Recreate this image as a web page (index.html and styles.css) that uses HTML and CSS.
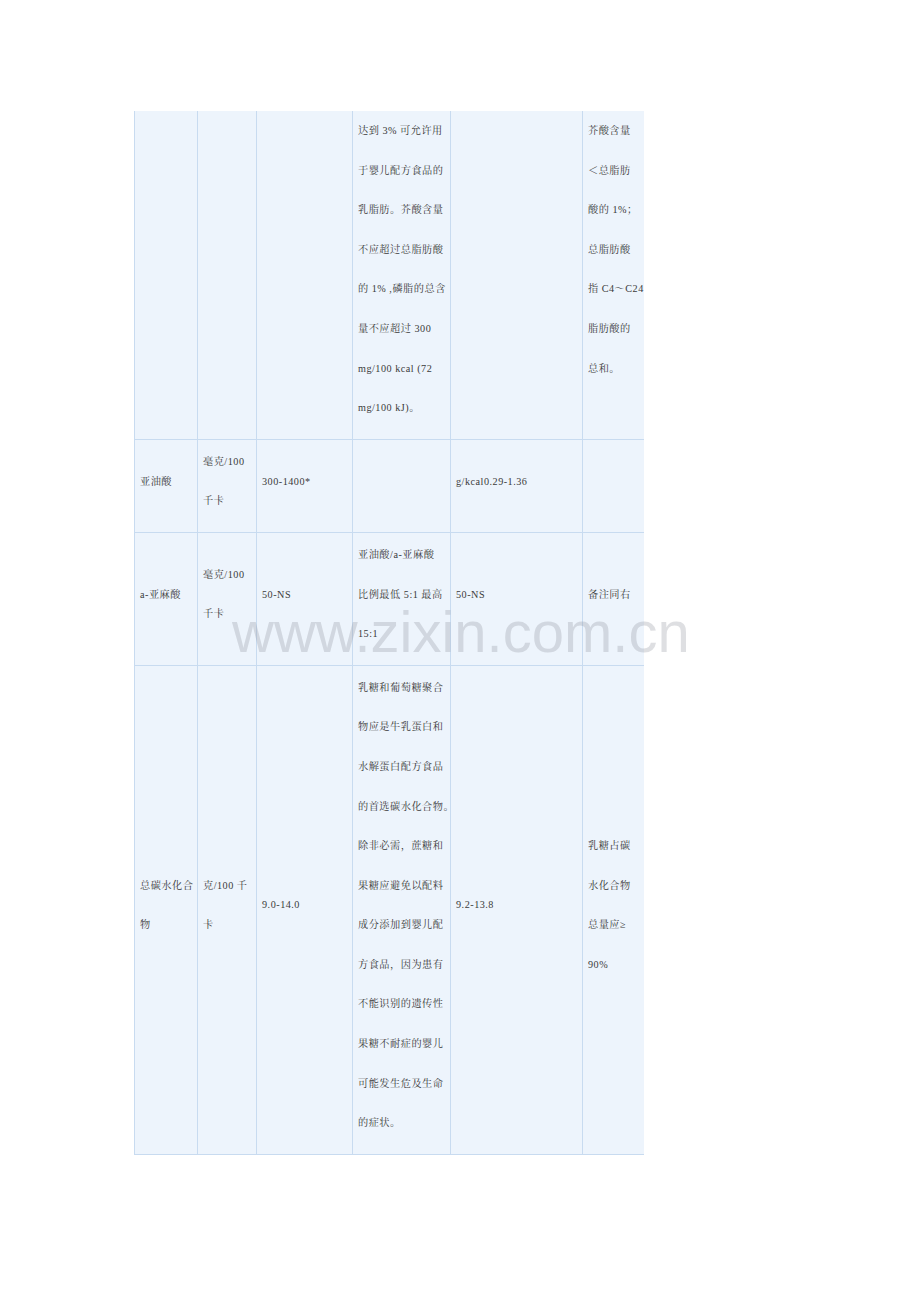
FILE: index.html
```html
<!DOCTYPE html>
<html lang="zh">
<head>
<meta charset="utf-8">
<title>营养成分表</title>
<link rel="stylesheet" href="styles.css">
</head>
<body>
<div class="page">
  <div class="clip">
    <table class="grid">
      <colgroup>
        <col class="c1"><col class="c2"><col class="c3"><col class="c4"><col class="c5"><col class="c6">
      </colgroup>
      <tr class="cont">
        <td></td>
        <td></td>
        <td></td>
        <td>达到 3% 可允许用<br>于婴儿配方食品的<br>乳脂肪。芥酸含量<br>不应超过总脂肪酸<br>的 1% ,磷脂的总含<br>量不应超过 300<br>mg/100 kcal (72<br>mg/100 kJ)。</td>
        <td></td>
        <td>芥酸含量<br>＜总脂肪<br>酸的 1%；<br>总脂肪酸<br>指 C4～C24<br>脂肪酸的<br>总和。</td>
      </tr>
      <tr>
        <td>亚油酸</td>
        <td>毫克/100<br>千卡</td>
        <td>300-1400*</td>
        <td></td>
        <td>g/kcal0.29-1.36</td>
        <td></td>
      </tr>
      <tr>
        <td>a-亚麻酸</td>
        <td>毫克/100<br>千卡</td>
        <td>50-NS</td>
        <td>亚油酸/a-亚麻酸<br>比例最低 5:1 最高<br>15:1</td>
        <td>50-NS</td>
        <td>备注同右</td>
      </tr>
      <tr>
        <td>总碳水化合<br>物</td>
        <td>克/100 千<br>卡</td>
        <td>9.0-14.0</td>
        <td>乳糖和葡萄糖聚合<br>物应是牛乳蛋白和<br>水解蛋白配方食品<br>的首选碳水化合物。<br>除非必需，蔗糖和<br>果糖应避免以配料<br>成分添加到婴儿配<br>方食品，因为患有<br>不能识别的遗传性<br>果糖不耐症的婴儿<br>可能发生危及生命<br>的症状。</td>
        <td>9.2-13.8</td>
        <td>乳糖占碳<br>水化合物<br>总量应≥<br>90%</td>
      </tr>
    </table>
  </div>
</div>
<div class="wm">www.zixin.com.cn</div>
</body>
</html>
```

FILE: styles.css
```css
html, body {
  margin: 0;
  padding: 0;
  background: #ffffff;
}

body {
  font-family: "Liberation Serif", "Noto Serif CJK SC", "Noto Sans CJK SC", serif;
  color: #3a3a3a;
  min-height: 1302px;
  position: relative;
}

.page {
  padding: 111px 0 0 134px;
}

.clip {
  width: 510px;
  overflow: hidden;
}

.grid {
  border-collapse: collapse;
  table-layout: fixed;
  width: 548px;
  background: #edf4fc;
}

.c1 { width: 63px; }
.c2 { width: 59px; }
.c3 { width: 96px; }
.c4 { width: 98px; }
.c5 { width: 132px; }
.c6 { width: 100px; }

.grid td {
  border: 1px solid #c8dbf0;
  padding: 2px 3px 11px 5px;
  vertical-align: middle;
  font-size: 10.2px;
  letter-spacing: 0.5px;
  line-height: 39.6px;
  white-space: nowrap;
  overflow: visible;
}

.grid td:last-child {
  border-right: none;
}

.grid .cont td {
  border-top: none;
  vertical-align: top;
  padding-top: 0;
}

.wm {
  position: absolute;
  left: 232px;
  top: 603px;
  font-family: "Liberation Sans", Arial, sans-serif;
  font-size: 58px;
  line-height: 58px;
  color: rgba(140, 145, 155, 0.29);
  white-space: nowrap;
  pointer-events: none;
}
```
